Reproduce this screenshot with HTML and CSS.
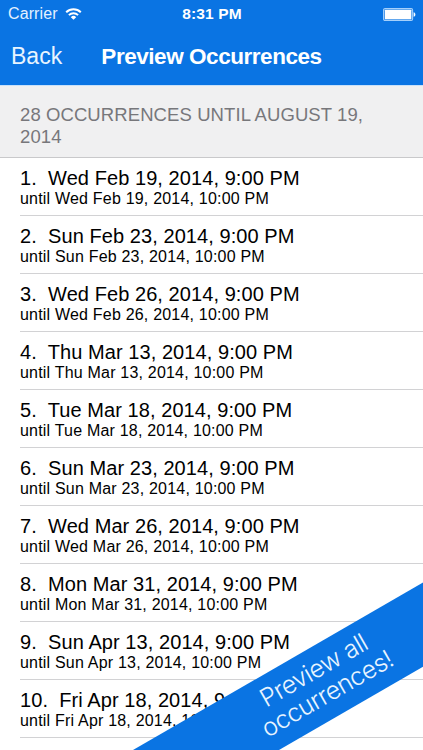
FILE: index.html
```html
<!DOCTYPE html>
<html lang="en">
<head>
    <meta charset="UTF-8">
    <meta name="viewport" content="width=device-width, initial-scale=1.0">
    <title>Preview Occurrences</title>
    <link rel="stylesheet" href="styles.css">
</head>
<body>
    <div class="screen">
        <header class="top">
            <div class="status-bar">
                <div class="carrier">
                    <span>Carrier</span>
                    <svg class="wifi" width="17" height="12" viewBox="0 0 17 12">
                        <path d="M1.2 4.3a10.4 10.4 0 0 1 14.6 0" fill="none" stroke="#fff" stroke-width="2"/>
                        <path d="M3.9 7.1a6.5 6.5 0 0 1 9.2 0" fill="none" stroke="#fff" stroke-width="1.9"/>
                        <path d="M8.5 11.8L5.8 9.2a3.8 3.8 0 0 1 5.4 0z" fill="#fff"/>
                    </svg>
                </div>
                <span class="time">8:31 PM</span>
                <svg class="battery" width="33" height="13" viewBox="0 0 33 13">
                    <rect x="0.6" y="0.6" width="29" height="11.8" rx="1.4" fill="none" stroke="#a5d0fb" stroke-width="1.1"/>
                    <rect x="1.8" y="1.8" width="26.6" height="9.4" rx="0.5" fill="#fff"/>
                    <path d="M30.6 4.2c2.4 .6 2.4 4 0 4.6z" fill="#fff"/>
                </svg>
            </div>
            <nav class="nav-bar">
                <a class="back">Back</a>
                <h1>Preview Occurrences</h1>
            </nav>
        </header>
        <h2 class="summary">28 OCCURRENCES UNTIL AUGUST 19,<br>2014</h2>
        <ul class="list">
            <li><p class="start">1.&nbsp; Wed Feb 19, 2014, 9:00 PM</p><p class="end">until Wed Feb 19, 2014, 10:00 PM</p></li>
            <li><p class="start">2.&nbsp; Sun Feb 23, 2014, 9:00 PM</p><p class="end">until Sun Feb 23, 2014, 10:00 PM</p></li>
            <li><p class="start">3.&nbsp; Wed Feb 26, 2014, 9:00 PM</p><p class="end">until Wed Feb 26, 2014, 10:00 PM</p></li>
            <li><p class="start">4.&nbsp; Thu Mar 13, 2014, 9:00 PM</p><p class="end">until Thu Mar 13, 2014, 10:00 PM</p></li>
            <li><p class="start">5.&nbsp; Tue Mar 18, 2014, 9:00 PM</p><p class="end">until Tue Mar 18, 2014, 10:00 PM</p></li>
            <li><p class="start">6.&nbsp; Sun Mar 23, 2014, 9:00 PM</p><p class="end">until Sun Mar 23, 2014, 10:00 PM</p></li>
            <li><p class="start">7.&nbsp; Wed Mar 26, 2014, 9:00 PM</p><p class="end">until Wed Mar 26, 2014, 10:00 PM</p></li>
            <li><p class="start">8.&nbsp; Mon Mar 31, 2014, 9:00 PM</p><p class="end">until Mon Mar 31, 2014, 10:00 PM</p></li>
            <li><p class="start">9.&nbsp; Sun Apr 13, 2014, 9:00 PM</p><p class="end">until Sun Apr 13, 2014, 10:00 PM</p></li>
            <li><p class="start">10.&nbsp; Fri Apr 18, 2014, 9:00 PM</p><p class="end">until Fri Apr 18, 2014, 10:00 PM</p></li>
        </ul>
        <div class="ribbon">
            <p>Preview all<br>occurrences!</p>
        </div>
    </div>
</body>
</html>
```

FILE: styles.css
```css
* {
    box-sizing: border-box;
    margin: 0;
    padding: 0;
}
body {
    font-family: "Liberation Sans", Arial, sans-serif;
    background: #fff;
    color: #000;
}
.screen {
    position: relative;
    height: 750px;
    overflow: hidden;
}
.top {
    height: 86px;
    background: #0a74e3;
    border-bottom: 1px solid #c8e1fa;
    color: #fff;
}
.status-bar {
    display: grid;
    grid-template-columns: 1fr auto 1fr;
    align-items: center;
    height: 28px;
    padding: 0 7px 0 8px;
}
.carrier {
    display: flex;
    align-items: center;
    gap: 7px;
    font-size: 16px;
    color: #e3f1ff;
    letter-spacing: 0.1px;
}
.time {
    font-size: 15.5px;
    font-weight: bold;
    letter-spacing: 0.1px;
}
.battery {
    justify-self: end;
}
.nav-bar {
    display: grid;
    grid-template-columns: 1fr auto 1fr;
    align-items: center;
    height: 57px;
    padding: 0 11px;
}
.back {
    font-size: 23px;
    color: #e8f4ff;
}
.nav-bar h1 {
    font-size: 22.5px;
    letter-spacing: -0.45px;
}
.summary {
    height: 72px;
    padding: 18px 20px 0;
    background: #f0f0f1;
    border-bottom: 1px solid #c9c9cb;
    color: #77777b;
    font-size: 18.5px;
    font-weight: normal;
    line-height: 22px;
    letter-spacing: 0.09px;
}
.list {
    list-style: none;
    padding-left: 20px;
}
.list li {
    height: 58px;
    padding-top: 9px;
    border-bottom: 1px solid #d2d2d4;
    white-space: nowrap;
}
.start {
    font-size: 20px;
    line-height: 22px;
    letter-spacing: 0.07px;
}
.end {
    font-size: 16px;
    line-height: 19px;
    letter-spacing: 0.2px;
}
/* diagonal promo band across the bottom right corner */
.ribbon {
    position: absolute;
    left: 66px;
    top: 650px;
    display: flex;
    align-items: center;
    justify-content: center;
    width: 500px;
    height: 73px;
    padding: 0 0 3px 12px;
    background: #0a74e3;
    color: #e8f4ff;
    transform: rotate(-30deg);
}
.ribbon p {
    font-family: Inter, "Liberation Sans", sans-serif;
    font-size: 25px;
    font-weight: 300;
    line-height: 27px;
    letter-spacing: -0.5px;
    text-align: center;
}
```
